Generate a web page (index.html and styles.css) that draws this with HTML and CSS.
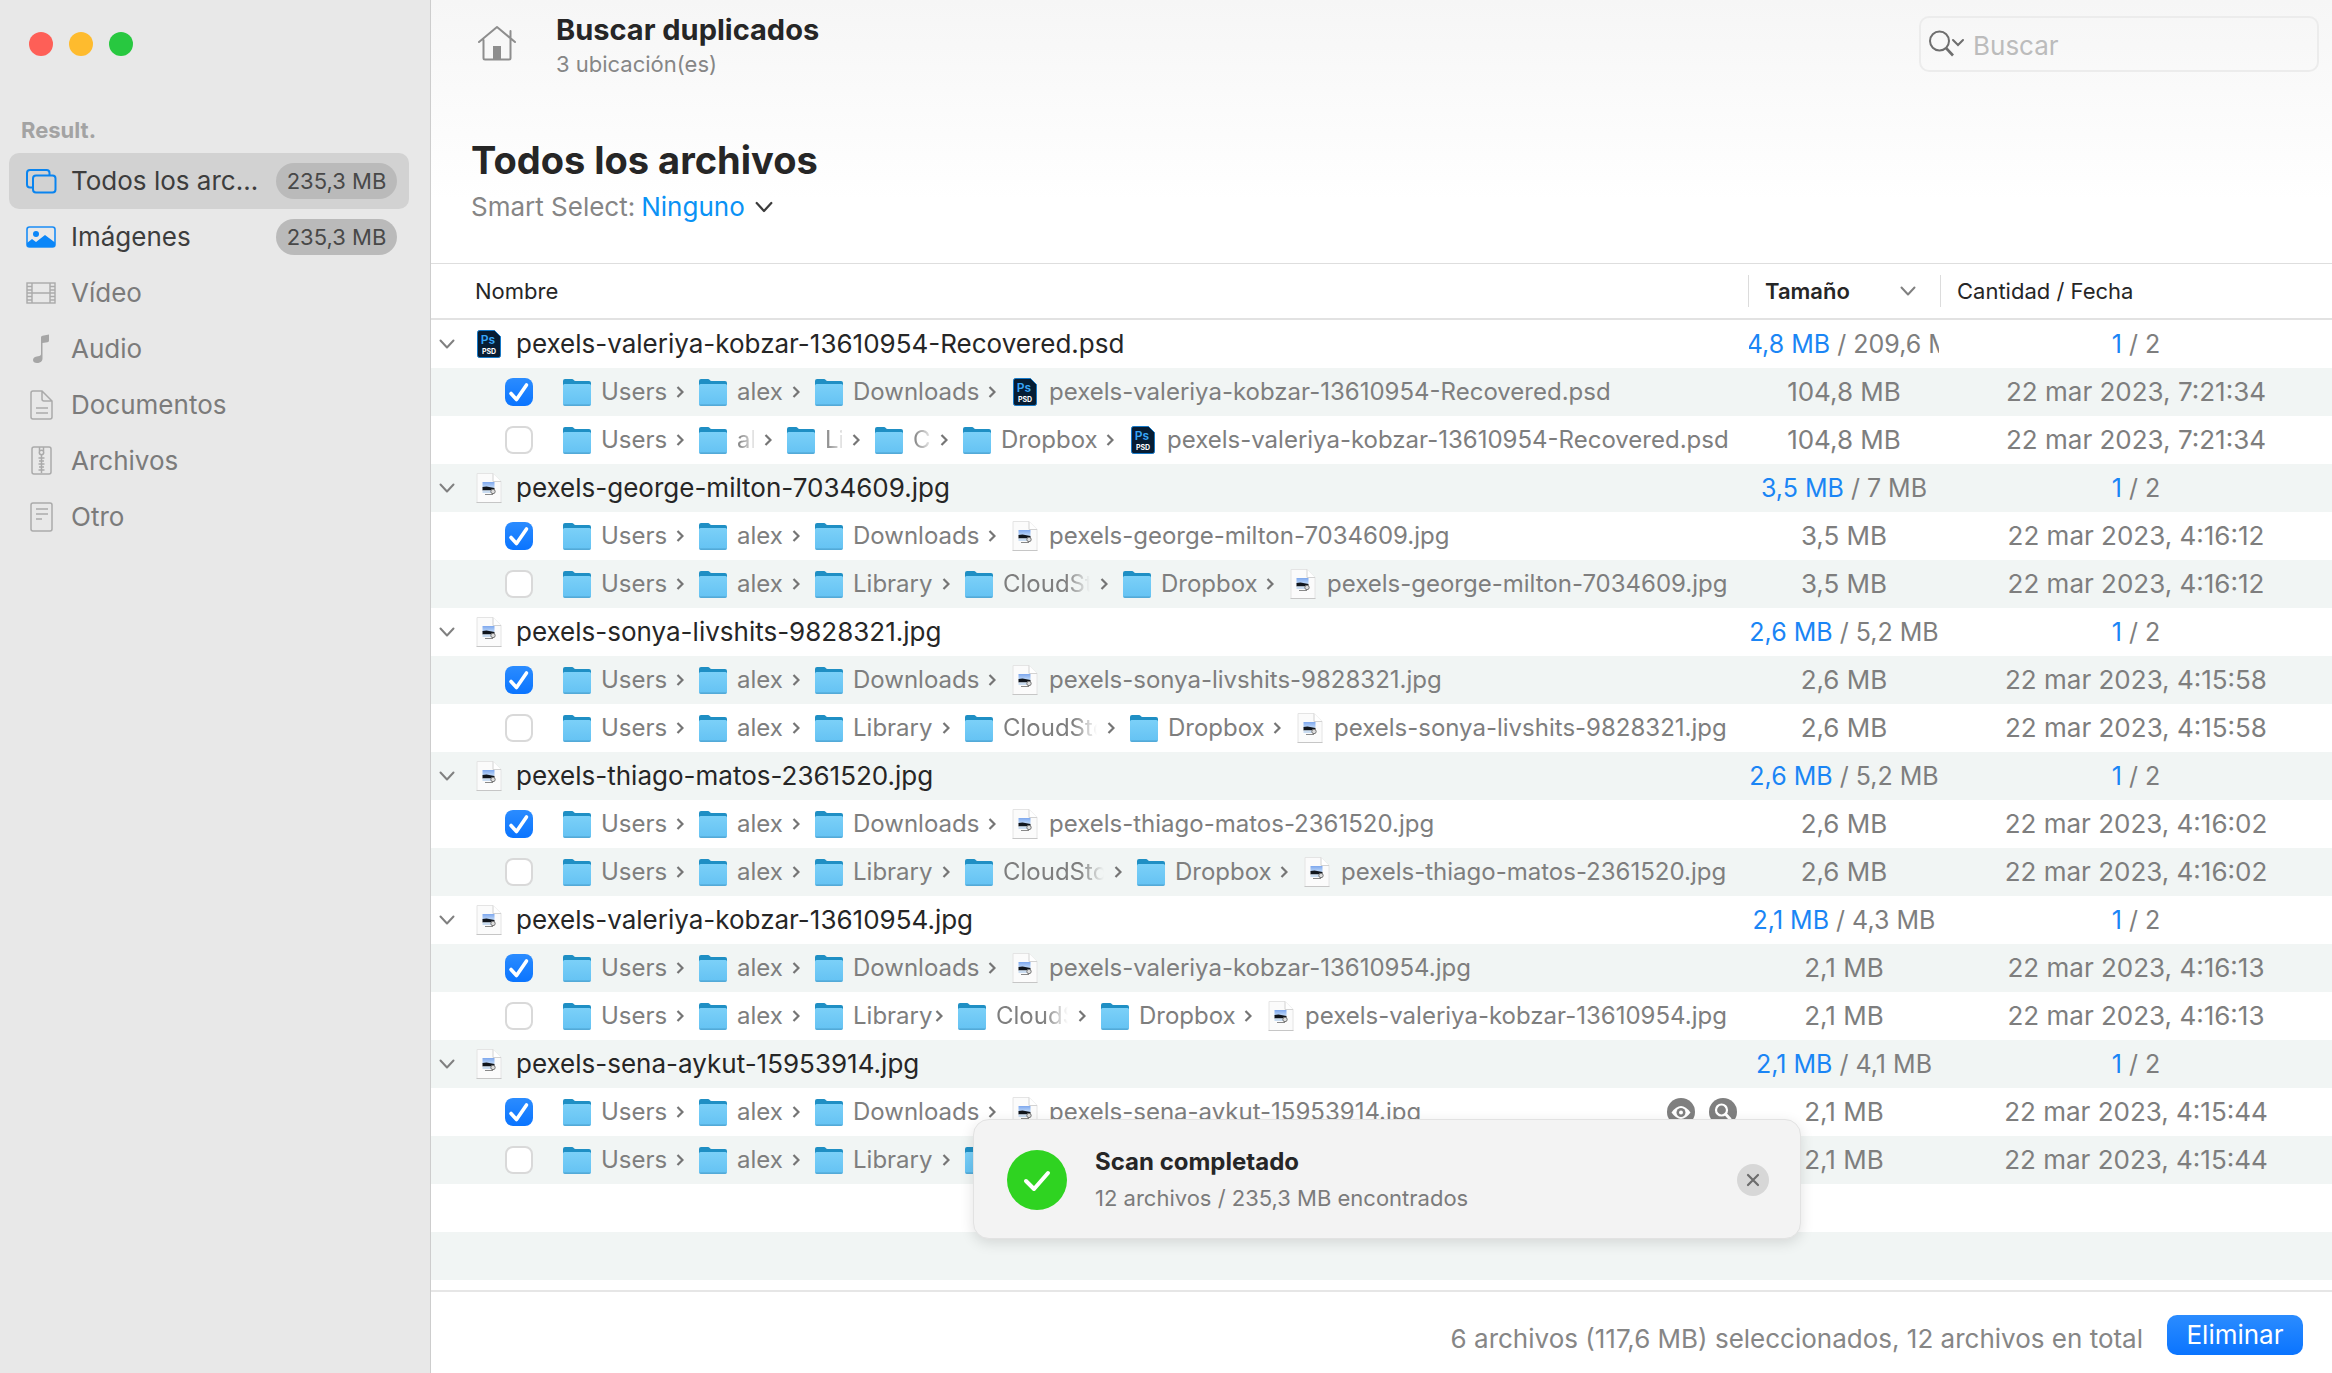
FILE: index.html
```html
<!DOCTYPE html>
<html lang="es">
<head>
<meta charset="utf-8">
<title>Buscar duplicados</title>
<link rel="stylesheet" href="styles.css">
</head>
<body>
<svg class="sprite" aria-hidden="true">
  <defs>
    <linearGradient id="folder-front" x1="0" y1="0" x2="0" y2="1">
      <stop offset="0" stop-color="#7bd0f8"/><stop offset="1" stop-color="#64c2f3"/>
    </linearGradient>
    <linearGradient id="photo-sky" x1="0" y1="0" x2="0" y2="1">
      <stop offset="0" stop-color="#7da7ee"/><stop offset="1" stop-color="#c4dcf8"/>
    </linearGradient>
  </defs>
  <symbol id="folder" viewBox="0 0 30 30">
    <path d="M1 4a2 2 0 0 1 2-2h7c1.500 0 2 2 3.500 2H27a2 2 0 0 1 2 2v8H1z" fill="#1f8fc4"/>
    <path d="M1 8.500a1.500 1.500 0 0 1 1.500-1.500h25a1.500 1.500 0 0 1 1.500 1.500V27a2 2 0 0 1-2 2H3a2 2 0 0 1-2-2z" fill="url(#folder-front)"/>
    <path d="M1.200 27.500a2 2 0 0 0 1.800 1.300h24a2 2 0 0 0 1.800-1.300z" fill="#4ea3cf"/>
  </symbol>
  <symbol id="psd" viewBox="0 0 30 30">
    <path d="M5.500 1.500h15l6 6v19a2 2 0 0 1-2 2h-19a2 2 0 0 1-2-2v-23a2 2 0 0 1 2-2z" fill="#061d34" stroke="#1579c8"/>
    <text x="14" y="15" text-anchor="middle" class="psd-mark">Ps</text>
    <text x="15" y="25" text-anchor="middle" class="psd-ext">PSD</text>
  </symbol>
  <symbol id="jpg" viewBox="0 0 30 30">
    <path d="M3 .5h16l8 8v21H3z" fill="#fbfbfb" stroke="#e4e4e4"/>
    <path d="M19 .5v8h8" fill="#fff" stroke="#d2d2d2"/>
    <path d="M2.500 29.500h25" stroke="#c6c6c6"/>
    <path d="M8.500 9h12v6h-12z" fill="url(#photo-sky)"/>
    <path d="M8.500 14l4-.5 8 1.500v2.500h-12z" fill="#10151c"/>
    <path d="M8.500 17.500h12V20h-12z" fill="#c9dcf1"/>
    <circle cx="19" cy="18.500" r="2.200" fill="#ddd" stroke="#777"/>
    <path d="M11 21.500h8" stroke="#888"/>
  </symbol>
  <symbol id="chevron-down" viewBox="0 0 16 16">
    <path d="M1.500 4.500 8 11.500 14.500 4.500" fill="none" stroke="currentColor" stroke-width="2" stroke-linecap="round" stroke-linejoin="round"/>
  </symbol>
</svg>

<aside class="sidebar">
  <div class="lights">
    <button class="light close" aria-label="Cerrar"></button>
    <button class="light minimize" aria-label="Minimizar"></button>
    <button class="light expand" aria-label="Ampliar"></button>
  </div>
  <h2 class="group">Result.</h2>
  <nav class="nav">
    <a class="item selected" href="#todos">
      <svg class="nav-icon" viewBox="0 0 32 32" fill="none" stroke="#0a84ef" stroke-width="2"><path d="M8 22.500H5a3 3 0 0 1-3-3V8a3 3 0 0 1 3-3h16.500a3 3 0 0 1 3 3v2"/><rect x="8" y="10.500" width="22.500" height="17" rx="3"/></svg>
      <span class="label">Todos los archivos</span><span class="badge">235,3 MB</span>
    </a>
    <a class="item" href="#imagenes">
      <svg class="nav-icon" viewBox="0 0 32 32"><rect x="2" y="6" width="28" height="20" rx="2.500" fill="none" stroke="#1a8cf5" stroke-width="1.600"/><circle cx="11" cy="13" r="3" fill="#0a86f8"/><path d="M2 22l5-4 4 3 9-7 10 7.500v2.500a2 2 0 0 1-2 2H4a2 2 0 0 1-2-2z" fill="#0a86f8"/></svg>
      <span class="label">Imágenes</span><span class="badge">235,3 MB</span>
    </a>
    <a class="item muted" href="#video">
      <svg class="nav-icon" viewBox="0 0 32 32" fill="none" stroke="#aaa" stroke-width="1.400"><rect x="2" y="6" width="28" height="20"/><path d="M7 6v20M25 6v20M7 16h18M2 9.500h5M2 13h5M2 16h5M2 19.500h5M2 23h5M25 9.500h5M25 13h5M25 16h5M25 19.500h5M25 23h5"/></svg>
      <span class="label">Vídeo</span>
    </a>
    <a class="item muted" href="#audio">
      <svg class="nav-icon" viewBox="0 0 32 32"><path d="M16 4.500q0-1.500 1.500-1.800L24 1.500v6q0 1.500-1.500 1.800L17.500 10v15.500c0 3-2.500 4.500-5.500 4.500-2.500 0-4-1.200-4-3s1.500-3.500 5-3.800c2-.2 3-.7 3-2.200z" fill="#a6a6a6"/></svg>
      <span class="label">Audio</span>
    </a>
    <a class="item muted" href="#documentos">
      <svg class="nav-icon" viewBox="0 0 32 32" fill="none" stroke="#aaa" stroke-width="1.500"><path d="M17 2H8a2 2 0 0 0-2 2v24a2 2 0 0 0 2 2h17a2 2 0 0 0 2-2V12zM17 2v8a2 2 0 0 0 2 2h8M11 19h12M11 24h12"/></svg>
      <span class="label">Documentos</span>
    </a>
    <a class="item muted" href="#archivos">
      <svg class="nav-icon" viewBox="0 0 32 32" fill="none" stroke="#aaa" stroke-width="1.500"><rect x="7" y="2" width="19" height="27" rx="2"/><circle cx="16.500" cy="7.500" r="2.200"/><path d="M14.500 2v4M18.500 2v4M16.500 10v18M13.500 13h6M14 16h5M13.500 19h6M14 22h5M13.500 25h6"/></svg>
      <span class="label">Archivos</span>
    </a>
    <a class="item muted" href="#otro">
      <svg class="nav-icon" viewBox="0 0 32 32" fill="none" stroke="#aaa" stroke-width="1.500"><rect x="6" y="2" width="21" height="28" rx="2"/><path d="M11 8h12M11 13h12M11 18h6"/></svg>
      <span class="label">Otro</span>
    </a>
  </nav>
</aside>

<main class="main">
  <header class="toolbar">
    <button class="home" aria-label="Inicio">
      <svg viewBox="0 0 40 40" fill="none" stroke="#8e8e8e" stroke-width="2" stroke-linecap="round" stroke-linejoin="round"><path d="M2 20 20 5l18 15M6.500 18v18a1.500 1.500 0 0 0 1.500 1.500h24a1.500 1.500 0 0 0 1.500-1.500V9"/><path d="M16 24h8v13h-8z" fill="#8e8e8e" stroke="none"/></svg>
    </button>
    <div class="titles">
      <h1 class="app-title">Buscar duplicados</h1>
      <p class="app-sub">3 ubicación(es)</p>
    </div>
    <label class="search">
      <svg class="search-icon" viewBox="0 0 36 28" fill="none" stroke="#6e6e6e" stroke-width="2"><circle cx="10.500" cy="11" r="9.500"/><path d="M17 18l7 7.500" stroke-width="2.600"/><path d="M24 10l5 5 5-5" stroke-linecap="round"/></svg>
      <input type="search" placeholder="Buscar" aria-label="Buscar">
    </label>
  </header>

  <section class="heading">
    <h2 class="view-title">Todos los archivos</h2>
    <div class="smart">Smart Select: <button class="smart-value">Ninguno<svg class="smart-chevron"><use href="#chevron-down"/></svg></button></div>
  </section>

  <div class="list">
    <table class="files">
      <colgroup><col><col class="col-size"><col class="col-date"></colgroup>
      <thead>
        <tr>
          <th scope="col" class="h-name">Nombre</th>
          <th scope="col"><div class="head sorted"><span>Tamaño</span><svg class="sort"><use href="#chevron-down"/></svg></div></th>
          <th scope="col"><div class="head">Cantidad / Fecha</div></th>
        </tr>
      </thead>
      <tbody>
        <tr class="parent">
          <td><div class="name"><button class="toggle" aria-label="Contraer"><svg><use href="#chevron-down"/></svg></button><svg class="icon"><use href="#psd"/></svg>pexels-valeriya-kobzar-13610954-Recovered.psd</div></td>
          <td><div class="sum"><b>104,8 MB</b> / 209,6 MB</div></td>
          <td><div class="sum"><b>1</b> / 2</div></td>
        </tr>
        <tr>
          <td><div class="path"><input type="checkbox" checked aria-label="Seleccionar copia 1"><span class="crumb users"><svg class="icon"><use href="#folder"/></svg><span>Users</span></span><span class="crumb alex"><svg class="icon"><use href="#folder"/></svg><span>alex</span></span><span class="crumb downloads"><svg class="icon"><use href="#folder"/></svg><span>Downloads</span></span><span class="file"><svg class="icon"><use href="#psd"/></svg>pexels-valeriya-kobzar-13610954-Recovered.psd</span></div></td>
          <td>104,8 MB</td><td>22 mar 2023, 7:21:34</td>
        </tr>
        <tr>
          <td><div class="path"><input type="checkbox" aria-label="Seleccionar copia 2"><span class="crumb users"><svg class="icon"><use href="#folder"/></svg><span>Users</span></span><span class="crumb fade tiny"><svg class="icon"><use href="#folder"/></svg><span>alex</span></span><span class="crumb fade tiny"><svg class="icon"><use href="#folder"/></svg><span>Library</span></span><span class="crumb fade tiny"><svg class="icon"><use href="#folder"/></svg><span>CloudStorage</span></span><span class="crumb dropbox"><svg class="icon"><use href="#folder"/></svg><span>Dropbox</span></span><span class="file"><svg class="icon"><use href="#psd"/></svg>pexels-valeriya-kobzar-13610954-Recovered.psd</span></div></td>
          <td>104,8 MB</td><td>22 mar 2023, 7:21:34</td>
        </tr>

        <tr class="parent">
          <td><div class="name"><button class="toggle" aria-label="Contraer"><svg><use href="#chevron-down"/></svg></button><svg class="icon"><use href="#jpg"/></svg>pexels-george-milton-7034609.jpg</div></td>
          <td><div class="sum"><b>3,5 MB</b> / 7 MB</div></td>
          <td><div class="sum"><b>1</b> / 2</div></td>
        </tr>
        <tr>
          <td><div class="path"><input type="checkbox" checked aria-label="Seleccionar copia 1"><span class="crumb users"><svg class="icon"><use href="#folder"/></svg><span>Users</span></span><span class="crumb alex"><svg class="icon"><use href="#folder"/></svg><span>alex</span></span><span class="crumb downloads"><svg class="icon"><use href="#folder"/></svg><span>Downloads</span></span><span class="file"><svg class="icon"><use href="#jpg"/></svg>pexels-george-milton-7034609.jpg</span></div></td>
          <td>3,5 MB</td><td>22 mar 2023, 4:16:12</td>
        </tr>
        <tr>
          <td><div class="path"><input type="checkbox" aria-label="Seleccionar copia 2"><span class="crumb users"><svg class="icon"><use href="#folder"/></svg><span>Users</span></span><span class="crumb alex"><svg class="icon"><use href="#folder"/></svg><span>alex</span></span><span class="crumb library"><svg class="icon"><use href="#folder"/></svg><span>Library</span></span><span class="crumb fade medium"><svg class="icon"><use href="#folder"/></svg><span>CloudStorage</span></span><span class="crumb dropbox"><svg class="icon"><use href="#folder"/></svg><span>Dropbox</span></span><span class="file"><svg class="icon"><use href="#jpg"/></svg>pexels-george-milton-7034609.jpg</span></div></td>
          <td>3,5 MB</td><td>22 mar 2023, 4:16:12</td>
        </tr>

        <tr class="parent">
          <td><div class="name"><button class="toggle" aria-label="Contraer"><svg><use href="#chevron-down"/></svg></button><svg class="icon"><use href="#jpg"/></svg>pexels-sonya-livshits-9828321.jpg</div></td>
          <td><div class="sum"><b>2,6 MB</b> / 5,2 MB</div></td>
          <td><div class="sum"><b>1</b> / 2</div></td>
        </tr>
        <tr>
          <td><div class="path"><input type="checkbox" checked aria-label="Seleccionar copia 1"><span class="crumb users"><svg class="icon"><use href="#folder"/></svg><span>Users</span></span><span class="crumb alex"><svg class="icon"><use href="#folder"/></svg><span>alex</span></span><span class="crumb downloads"><svg class="icon"><use href="#folder"/></svg><span>Downloads</span></span><span class="file"><svg class="icon"><use href="#jpg"/></svg>pexels-sonya-livshits-9828321.jpg</span></div></td>
          <td>2,6 MB</td><td>22 mar 2023, 4:15:58</td>
        </tr>
        <tr>
          <td><div class="path"><input type="checkbox" aria-label="Seleccionar copia 2"><span class="crumb users"><svg class="icon"><use href="#folder"/></svg><span>Users</span></span><span class="crumb alex"><svg class="icon"><use href="#folder"/></svg><span>alex</span></span><span class="crumb library"><svg class="icon"><use href="#folder"/></svg><span>Library</span></span><span class="crumb fade large"><svg class="icon"><use href="#folder"/></svg><span>CloudStorage</span></span><span class="crumb dropbox"><svg class="icon"><use href="#folder"/></svg><span>Dropbox</span></span><span class="file"><svg class="icon"><use href="#jpg"/></svg>pexels-sonya-livshits-9828321.jpg</span></div></td>
          <td>2,6 MB</td><td>22 mar 2023, 4:15:58</td>
        </tr>

        <tr class="parent">
          <td><div class="name"><button class="toggle" aria-label="Contraer"><svg><use href="#chevron-down"/></svg></button><svg class="icon"><use href="#jpg"/></svg>pexels-thiago-matos-2361520.jpg</div></td>
          <td><div class="sum"><b>2,6 MB</b> / 5,2 MB</div></td>
          <td><div class="sum"><b>1</b> / 2</div></td>
        </tr>
        <tr>
          <td><div class="path"><input type="checkbox" checked aria-label="Seleccionar copia 1"><span class="crumb users"><svg class="icon"><use href="#folder"/></svg><span>Users</span></span><span class="crumb alex"><svg class="icon"><use href="#folder"/></svg><span>alex</span></span><span class="crumb downloads"><svg class="icon"><use href="#folder"/></svg><span>Downloads</span></span><span class="file"><svg class="icon"><use href="#jpg"/></svg>pexels-thiago-matos-2361520.jpg</span></div></td>
          <td>2,6 MB</td><td>22 mar 2023, 4:16:02</td>
        </tr>
        <tr>
          <td><div class="path"><input type="checkbox" aria-label="Seleccionar copia 2"><span class="crumb users"><svg class="icon"><use href="#folder"/></svg><span>Users</span></span><span class="crumb alex"><svg class="icon"><use href="#folder"/></svg><span>alex</span></span><span class="crumb library"><svg class="icon"><use href="#folder"/></svg><span>Library</span></span><span class="crumb fade xlarge"><svg class="icon"><use href="#folder"/></svg><span>CloudStorage</span></span><span class="crumb dropbox"><svg class="icon"><use href="#folder"/></svg><span>Dropbox</span></span><span class="file"><svg class="icon"><use href="#jpg"/></svg>pexels-thiago-matos-2361520.jpg</span></div></td>
          <td>2,6 MB</td><td>22 mar 2023, 4:16:02</td>
        </tr>

        <tr class="parent">
          <td><div class="name"><button class="toggle" aria-label="Contraer"><svg><use href="#chevron-down"/></svg></button><svg class="icon"><use href="#jpg"/></svg>pexels-valeriya-kobzar-13610954.jpg</div></td>
          <td><div class="sum"><b>2,1 MB</b> / 4,3 MB</div></td>
          <td><div class="sum"><b>1</b> / 2</div></td>
        </tr>
        <tr>
          <td><div class="path"><input type="checkbox" checked aria-label="Seleccionar copia 1"><span class="crumb users"><svg class="icon"><use href="#folder"/></svg><span>Users</span></span><span class="crumb alex"><svg class="icon"><use href="#folder"/></svg><span>alex</span></span><span class="crumb downloads"><svg class="icon"><use href="#folder"/></svg><span>Downloads</span></span><span class="file"><svg class="icon"><use href="#jpg"/></svg>pexels-valeriya-kobzar-13610954.jpg</span></div></td>
          <td>2,1 MB</td><td>22 mar 2023, 4:16:13</td>
        </tr>
        <tr>
          <td><div class="path"><input type="checkbox" aria-label="Seleccionar copia 2"><span class="crumb users"><svg class="icon"><use href="#folder"/></svg><span>Users</span></span><span class="crumb alex"><svg class="icon"><use href="#folder"/></svg><span>alex</span></span><span class="crumb small"><svg class="icon"><use href="#folder"/></svg><span>Library</span></span><span class="crumb fade small"><svg class="icon"><use href="#folder"/></svg><span>CloudStorage</span></span><span class="crumb dropbox"><svg class="icon"><use href="#folder"/></svg><span>Dropbox</span></span><span class="file"><svg class="icon"><use href="#jpg"/></svg>pexels-valeriya-kobzar-13610954.jpg</span></div></td>
          <td>2,1 MB</td><td>22 mar 2023, 4:16:13</td>
        </tr>

        <tr class="parent">
          <td><div class="name"><button class="toggle" aria-label="Contraer"><svg><use href="#chevron-down"/></svg></button><svg class="icon"><use href="#jpg"/></svg>pexels-sena-aykut-15953914.jpg</div></td>
          <td><div class="sum"><b>2,1 MB</b> / 4,1 MB</div></td>
          <td><div class="sum"><b>1</b> / 2</div></td>
        </tr>
        <tr>
          <td><div class="path"><input type="checkbox" checked aria-label="Seleccionar copia 1"><span class="crumb users"><svg class="icon"><use href="#folder"/></svg><span>Users</span></span><span class="crumb alex"><svg class="icon"><use href="#folder"/></svg><span>alex</span></span><span class="crumb downloads"><svg class="icon"><use href="#folder"/></svg><span>Downloads</span></span><span class="file"><svg class="icon"><use href="#jpg"/></svg>pexels-sena-aykut-15953914.jpg</span>
            <span class="actions">
              <button aria-label="Vista rápida"><svg viewBox="0 0 28 28"><circle cx="14" cy="14" r="14" fill="#7f7f7f"/><path d="M4.500 14.500q9.500-13 19 0-9.500 13-19 0z" fill="#fff"/><circle cx="14" cy="14.500" r="4.500" fill="#7f7f7f"/><circle cx="14" cy="14.500" r="2" fill="#fff"/></svg></button>
              <button aria-label="Mostrar en Finder"><svg viewBox="0 0 28 28"><circle cx="14" cy="14" r="14" fill="#7f7f7f"/><circle cx="12.500" cy="12" r="5.500" fill="none" stroke="#fff" stroke-width="2.200"/><path d="M16.500 16l5 5.500" stroke="#fff" stroke-width="3"/></svg></button>
            </span></div></td>
          <td>2,1 MB</td><td>22 mar 2023, 4:15:44</td>
        </tr>
        <tr>
          <td><div class="path"><input type="checkbox" aria-label="Seleccionar copia 2"><span class="crumb users"><svg class="icon"><use href="#folder"/></svg><span>Users</span></span><span class="crumb alex"><svg class="icon"><use href="#folder"/></svg><span>alex</span></span><span class="crumb library"><svg class="icon"><use href="#folder"/></svg><span>Library</span></span><span class="crumb last"><svg class="icon"><use href="#folder"/></svg></span></div></td>
          <td>2,1 MB</td><td>22 mar 2023, 4:15:44</td>
        </tr>
        <tr><td></td><td></td><td></td></tr>
        <tr><td></td><td></td><td></td></tr>
      </tbody>
    </table>
  </div>

  <footer class="footer">
    <p>6 archivos (117,6 MB) seleccionados, 12 archivos en total</p>
    <button class="primary">Eliminar</button>
  </footer>

  <div class="toast" role="status">
    <svg class="toast-icon" viewBox="0 0 60 60"><circle cx="30" cy="30" r="30" fill="#2fd321"/><path d="M19 31l8 8 14-16" fill="none" stroke="#fff" stroke-width="4" stroke-linecap="round" stroke-linejoin="round"/></svg>
    <div class="toast-text">
      <strong>Scan completado</strong>
      <span>12 archivos / 235,3 MB encontrados</span>
    </div>
    <button class="dismiss" aria-label="Cerrar aviso"><svg viewBox="0 0 32 32"><path d="M11 11l10 10M21 11 11 21" stroke="#6c6c6c" stroke-width="2.200" stroke-linecap="round"/></svg></button>
  </div>
</main>
</body>
</html>
```
FILE: styles.css
```css
* { box-sizing: border-box; }

body {
  margin: 0;
  min-height: 100vh;
  display: flex;
  font-family: Inter, "Liberation Sans", sans-serif;
  font-size: 26px;
  line-height: 30px;
  color: #262626;
  background: #fff;
}

h1, h2, p { margin: 0; }

button {
  font: inherit;
  color: inherit;
  border: 0;
  padding: 0;
  background: none;
}

svg { display: block; flex: none; }

.sprite { position: absolute; width: 0; height: 0; }

/* Sidebar */
.sidebar {
  flex: none;
  width: 431px;
  padding: 32px 21px 0 9px;
  background: #e8e8e8;
  border-right: 1px solid #cdcdcd;
}

.lights { display: flex; gap: 16px; padding-left: 20px; }
.light { width: 24px; height: 24px; border-radius: 50%; }
.close { background: #fe5f57; }
.minimize { background: #febb2e; }
.expand { background: #28c840; }

.group {
  margin: 59px 0 8px 12px;
  font-size: 22px;
  line-height: 30px;
  font-weight: 700;
  color: #a3a3a3;
}

.nav { display: flex; flex-direction: column; }

.item {
  display: flex;
  align-items: center;
  height: 56px;
  padding: 0 12px 0 16px;
  border-radius: 10px;
  color: #3d3d3d;
  text-decoration: none;
}
.item.selected { background: #d2d2d2; }
.item.muted { color: #7b7b7b; }
.nav-icon { width: 32px; height: 32px; margin-right: 14px; }
.label {
  flex: 1;
  min-width: 0;
  overflow: hidden;
  white-space: nowrap;
  text-overflow: ellipsis;
}
.badge {
  flex: none;
  width: 121px;
  margin-left: 14px;
  border-radius: 18px;
  background: #bababa;
  font-size: 22px;
  line-height: 36px;
  text-align: center;
  color: #484848;
}

/* Main column */
.main {
  position: relative;
  flex: 1;
  min-width: 0;
  display: flex;
  flex-direction: column;
  background: linear-gradient(#f6f6f6, #fff 200px);
}

.toolbar {
  display: flex;
  align-items: flex-start;
  padding: 12px 13px 0 46px;
}
.home { width: 40px; height: 40px; margin: 10px 39px 0 0; }
.app-title { font-size: 29px; line-height: 36px; font-weight: 700; }
.app-sub { font-size: 22px; line-height: 32px; color: #868686; }

.search {
  display: flex;
  align-items: center;
  width: 400px;
  height: 56px;
  margin: 4px 0 0 auto;
  padding-left: 8px;
  border: 2px solid #ececec;
  border-radius: 10px;
}
.search-icon { width: 36px; height: 28px; margin-right: 8px; }
.search input {
  flex: 1;
  min-width: 0;
  border: 0;
  padding: 4px 0 0;
  font: inherit;
  background: none;
}
.search input::placeholder { color: #bcbcbc; opacity: 1; }

.heading { padding: 56px 40px 38px; }
.view-title { font-size: 38px; line-height: 48px; font-weight: 700; }
.smart { display: flex; gap: 6px; line-height: 36px; padding-top: 5px; color: #868686; }
.smart-value { display: flex; align-items: center; gap: 10px; color: #0a92f5; }
.smart-chevron { width: 18px; height: 18px; color: #3c3c3c; }

/* File table */
.list { flex: 1; background: #fff; }

.files {
  width: 100%;
  table-layout: fixed;
  border-collapse: separate;
  border-spacing: 0;
}
.col-size { width: 192px; }
.col-date { width: 392px; }

.files th {
  height: 57px;
  padding: 0;
  border-top: 1px solid #dedede;
  border-bottom: 2px solid #e2e2e2;
  font-size: 22px;
  font-weight: 400;
  text-align: left;
}
.files .h-name { padding-left: 44px; }
.head {
  display: flex;
  align-items: center;
  height: 32px;
  padding-left: 16px;
  border-left: 1px solid #dcdcdc;
}
.sorted { justify-content: space-between; padding-right: 24px; font-weight: 600; }
.sort { width: 16px; height: 16px; color: #808080; }

.files td {
  height: 48px;
  padding: 0;
  text-align: center;
  white-space: nowrap;
  color: #7e7e7e;
}
.files tbody tr:nth-child(even) { background: #f1f5f4; }
.files b { font-weight: 400; color: #1a85f5; }

.name, .path { display: flex; align-items: center; }
.name { padding-left: 8px; color: #262626; }
.toggle { width: 16px; height: 16px; margin-right: 19px; color: #808080; }
.toggle svg { width: 16px; height: 16px; }
.icon { width: 30px; height: 30px; margin-right: 9px; }
.name .icon { margin-right: 12px; }

.sum {
  display: flex;
  justify-content: center;
  overflow: hidden;
  margin: 0 1px;
  font-size: 25px;
  white-space: pre;
}

.path { padding: 0 11px 0 74px; font-size: 24px; }
.path input {
  appearance: none;
  flex: none;
  width: 28px;
  height: 28px;
  margin: 0 29px 0 0;
  border: 2px solid #d9d9d9;
  border-radius: 8px;
  background: #fff;
}
.path input:checked {
  border: 0;
  background: url("data:image/svg+xml,%3Csvg xmlns='http://www.w3.org/2000/svg' viewBox='0 0 28 28'%3E%3Cpath d='M6 15.500 11.500 21.500 21.500 7' fill='none' stroke='white' stroke-width='3.600' stroke-linecap='round' stroke-linejoin='round'/%3E%3C/svg%3E"), linear-gradient(#2b8cff, #0a74ff);
}

.crumb, .file { display: flex; flex: none; align-items: center; }
.crumb > span { text-align: left; }
.crumb::after {
  content: "";
  width: 8px;
  height: 14px;
  margin: 0 14px 0 10px;
  background: url("data:image/svg+xml,%3Csvg xmlns='http://www.w3.org/2000/svg' viewBox='0 0 8 14'%3E%3Cpath d='M1.500 2 6.500 7 1.500 12' fill='none' stroke='%23757575' stroke-width='2.200'/%3E%3C/svg%3E");
}
.crumb.last::after { display: none; }
.users > span { width: 65px; }
.alex > span { width: 45px; }
.downloads > span { width: 125px; }
.library > span { width: 79px; }
.dropbox > span { width: 95px; }
.tiny > span { width: 17px; }
.small > span { width: 72px; }
.medium > span { width: 87px; }
.large > span { width: 94px; }
.xlarge > span { width: 101px; }
.fade > span {
  overflow: hidden;
  -webkit-mask-image: linear-gradient(to left, transparent, #000 24px);
  mask-image: linear-gradient(to left, transparent, #000 24px);
}
.tiny > span {
  -webkit-mask-image: linear-gradient(to left, rgba(0, 0, 0, .2), #000 17px);
  mask-image: linear-gradient(to left, rgba(0, 0, 0, .2), #000 17px);
}

.psd-mark { font: 600 12px Inter, sans-serif; fill: #37a6f8; }
.psd-ext { font: 700 7px Inter, sans-serif; fill: #fff; }

.actions { display: flex; gap: 14px; margin-left: auto; }
.actions button, .actions svg { width: 28px; height: 28px; }

/* Footer */
.footer {
  display: flex;
  align-items: center;
  justify-content: flex-end;
  gap: 24px;
  height: 83px;
  padding: 12px 29px 0 0;
  border-top: 2px solid #e6e6e6;
  background: #fff;
  color: #868686;
}
.primary {
  width: 136px;
  height: 40px;
  margin-bottom: 7px;
  border-radius: 10px;
  background: linear-gradient(#2b8cff, #0a74ff);
  color: #fff;
}

/* Notification over the list */
.toast {
  position: absolute;
  right: 531px;
  bottom: 134px;
  display: flex;
  align-items: center;
  width: 828px;
  height: 120px;
  padding: 2px 31px 0 33px;
  border: 1px solid #e2e2e2;
  border-radius: 16px;
  background: #f3f3f3;
  box-shadow: 0 4px 14px rgba(0, 0, 0, .12);
}
.toast-icon { width: 60px; height: 60px; margin-right: 28px; }
.toast-text { flex: 1; display: flex; flex-direction: column; gap: 6px; }
.toast-text strong { font-size: 24px; font-weight: 700; }
.toast-text span { font-size: 22px; color: #7b7b7b; }
.dismiss { width: 32px; height: 32px; border-radius: 50%; background: #d7d7d7; }
```
